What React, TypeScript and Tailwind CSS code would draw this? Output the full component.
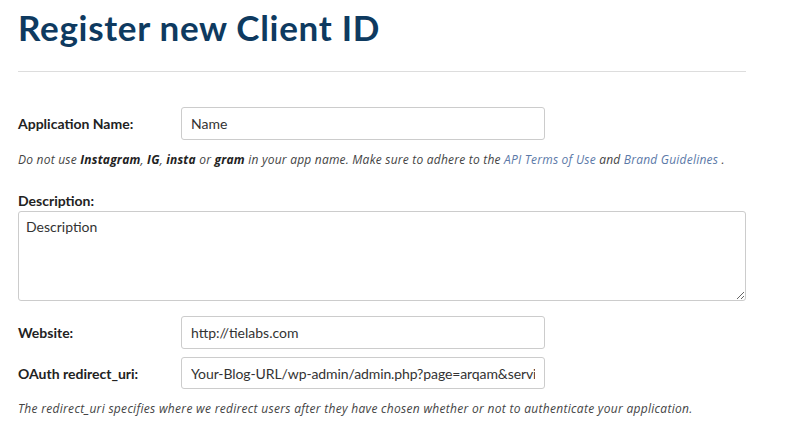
import React from "react";

export default function App() {
  return (
    <div className="w-[804px] h-[430px] bg-white overflow-hidden font-['Lato','Noto_Sans',sans-serif] text-[#222]">
      <div className="pl-[18px] w-[746px]">
        <h1 className="pt-[7px] text-[35px] leading-[40px] font-bold text-[#0e3a60] tracking-[0.7px]">
          Register new Client ID
        </h1>
        <div className="mt-[24px] h-px bg-[#dddddd]" />

        <div className="mt-[35px] flex items-center">
          <label className="w-[163px] text-[14px] font-bold text-[#222]">Application Name:</label>
          <input
            readOnly
            value="Name"
            className="w-[364px] h-[33px] px-[9px] border border-[#cccccc] rounded-[3px] text-[14px] text-[#333] outline-none"
          />
        </div>
        <p className="mt-[12px] font-['Open_Sans',sans-serif] text-[12px] leading-[16px] italic text-[#444] tracking-[0.22px]">
          Do not use <b className="text-[#222]">Instagram</b>, <b className="text-[#222]">IG</b>,{" "}
          <b className="text-[#222]">insta</b> or <b className="text-[#222]">gram</b> in your app name. Make sure to
          adhere to the <span className="text-[#5b79a8]">API Terms of Use</span> and{" "}
          <span className="text-[#5b79a8]">Brand Guidelines</span> .
        </p>

        <label className="block mt-[25px] text-[14px] leading-[16px] font-bold text-[#222]">Description:</label>
        <textarea
          readOnly
          value="Description"
          className="block mt-[2px] w-[728px] h-[90px] px-[7px] py-[4px] border border-[#cccccc] rounded-[3px] text-[14px] text-[#333] outline-none"
        />

        <div className="mt-[15px] flex items-center">
          <label className="w-[163px] text-[14px] font-bold text-[#222]">Website:</label>
          <input
            readOnly
            value="http://tielabs.com"
            className="w-[364px] h-[33px] px-[9px] border border-[#cccccc] rounded-[3px] text-[14px] text-[#333] outline-none"
          />
        </div>
        <div className="mt-[8px] flex items-center">
          <label className="w-[163px] text-[14px] font-bold text-[#222]">OAuth redirect_uri:</label>
          <input
            readOnly
            value="Your-Blog-URL/wp-admin/admin.php?page=arqam&service=instagram"
            className="w-[364px] h-[32px] px-[9px] border border-[#cccccc] rounded-[3px] text-[14px] text-[#333] outline-none tracking-[-0.1px]"
          />
        </div>
        <p className="mt-[12px] font-['Open_Sans',sans-serif] text-[12px] leading-[16px] italic text-[#444] tracking-[0.3px]">
          The redirect_uri specifies where we redirect users after they have chosen whether or not to authenticate your
          application.
        </p>
      </div>
    </div>
  );
}
